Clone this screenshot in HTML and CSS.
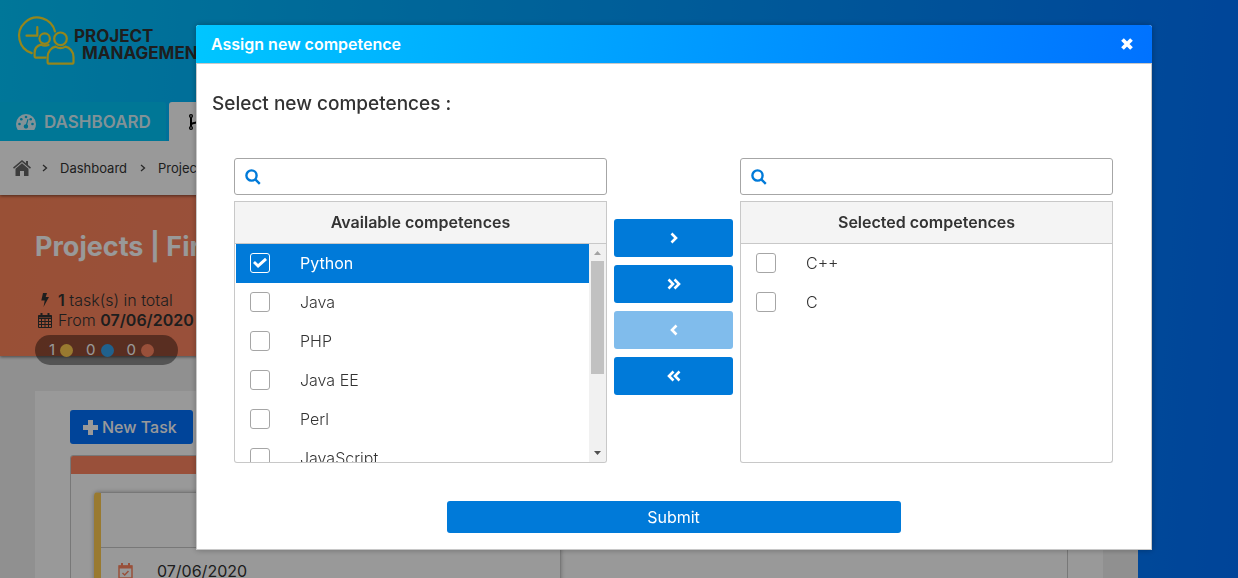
FILE: index.html
```html
<!DOCTYPE html>
<html lang="en">
<head>
<meta charset="utf-8">
<title>Project Management</title>
<link rel="stylesheet" href="styles.css">
</head>
<body>
<div class="page">
  <header class="brand">
    <svg class="brand-logo" width="56" height="50" viewBox="0 0 56 50" fill="none" stroke="#f8df2e" stroke-width="2.2" stroke-linecap="round" stroke-linejoin="round">
      <path d="M13.700 37.100A18.200 18.200 0 1 1 37 15.500"/>
      <path d="M8.500 19.700H19.300V11"/>
      <circle cx="26.700" cy="22.600" r="5.200"/>
      <path d="M27.500 41.600H17.600Q16.600 41.600 16.600 40.600V37C16.600 32.500 19.500 29.500 23 28.600Q26.500 30.500 30.500 29"/>
      <circle cx="42.500" cy="22.800" r="6.300"/>
      <path d="M29.600 46.500V41C29.600 35.500 33.500 31.500 37.500 30.600Q42.500 33.500 47.500 30.600C51.500 31.500 55.500 35.500 55.500 41V46.500Q55.500 47.600 54.500 47.600H30.600Q29.600 47.600 29.600 46.500Z"/>
    </svg>
    <p class="brand-name"><span>PROJECT</span><span class="brand-second">MANAGEMENT</span></p>
  </header>
  <nav class="tabs">
    <a class="tab" href="#">
      <svg width="20" height="16" viewBox="0 0 20 16"><path fill="currentColor" d="M10 0A10 10 0 0 0 0 10Q0 13 1.500 15.500Q1.700 16 2.500 16H17.500Q18.300 16 18.500 15.500Q20 13 20 10A10 10 0 0 0 10 0Z"/><g fill="#00b9e8"><circle cx="3.500" cy="10" r="1.300"/><circle cx="5.300" cy="5.300" r="1.300"/><circle cx="10" cy="3" r="1.300"/><circle cx="14.700" cy="5.300" r="1.300"/><circle cx="16.500" cy="10" r="1.300"/><path d="M11.500 5L12.500 5.300L11.200 10.600A2.200 2.200 0 1 1 10 10.200Z"/></g></svg>
      DASHBOARD
    </a>
    <a class="tab tab-active" href="#" aria-label="Projects">
      <svg width="16" height="16" viewBox="0 0 16 16" fill="none" stroke="#000" stroke-width="1.300"><circle cx="3" cy="2" r="1.400"/><circle cx="3" cy="14" r="1.400"/><circle cx="12" cy="4" r="1.400"/><path stroke-width="2" d="M3 3.500V12.500M3 10.500C5 7.500 11 10 12 5.500"/></svg>
    </a>
  </nav>
  <main class="main">
    <nav class="crumbs">
      <a href="#" aria-label="Home"><svg width="18" height="16" viewBox="0 0 18 16" fill="#666"><path d="M9 0L0 7.500L1 8.700L9 2L17 8.700L18 7.500L15 5V1H13V3.300Z"/><path d="M9 3.300L2.500 8.800V16H7V11H11V16H15.500V8.800Z"/></svg></a>
      <svg width="6" height="8" viewBox="0 0 6 8" fill="none" stroke="#444" stroke-width="1.300"><path d="M1 1L4.500 4L1 7"/></svg>
      <a class="crumb" href="#">Dashboard</a>
      <svg width="6" height="8" viewBox="0 0 6 8" fill="none" stroke="#444" stroke-width="1.300"><path d="M1 1L4.500 4L1 7"/></svg>
      <a class="crumb" href="#">Projects</a>
    </nav>
    <section class="hero">
      <h1 class="hero-title">Projects | Fir</h1>
      <p class="hero-line"><svg width="20" height="16" viewBox="0 0 20 16"><path fill="#333" d="M8 1H12L10.700 5H14L8.500 15L9.700 8.500H6.300Z"/></svg><span><b>1</b> task(s) in total</span></p>
      <p class="hero-line"><svg width="20" height="16" viewBox="0 0 20 16" fill="none" stroke="#333"><path d="M3.500 3.500H16.500V15.500H3.500ZM3.500 6.500H16.500M3.500 9.500H16.500M3.500 12.500H16.500M6.500 6V15M10 6V15M13.500 6V15"/><path stroke-width="2" d="M6.500 1V4M13.500 1V4M3.500 4.500H16.500"/></svg><span>From <b>07/06/2020</b></span></p>
      <div class="counts">
        <span>1</span><i class="dot dot-yellow"></i>
        <span>0</span><i class="dot dot-blue"></i>
        <span>0</span><i class="dot dot-coral"></i>
      </div>
    </section>
    <section class="board">
      <button class="new-task" type="button"><svg width="15" height="15" viewBox="0 0 15 15" fill="currentColor"><path d="M5 0H10V5H15V10H10V15H5V10H0V5H5Z"/></svg>New Task</button>
      <div class="lane">
        <div class="lane-bar"></div>
        <article class="card">
          <div class="card-head"></div>
          <p class="card-date"><svg width="15" height="16" viewBox="0 0 15 16" fill="none" stroke="#ff8562" stroke-width="1.500"><path d="M1 3H14V15H1Z"/><path stroke-width="3" d="M1 4H14"/><path stroke-width="2" d="M4 0V4M11 0V4"/><path d="M4.500 10L6.700 12L10.500 8"/></svg>07/06/2020</p>
        </article>
      </div>
    </section>
  </main>
</div>

<div class="overlay">
  <div class="modal" role="dialog" aria-labelledby="modal-title">
    <header class="modal-head">
      <h2 class="modal-title" id="modal-title">Assign new competence</h2>
      <button class="close" type="button" aria-label="Close"><svg width="12" height="12" viewBox="0 0 12 12" fill="none" stroke="#fff" stroke-width="3.800" stroke-linecap="butt"><path d="M1.500 1.500L10.500 10.500M10.500 1.500L1.500 10.500"/></svg></button>
    </header>
    <form class="modal-body">
      <h3 class="prompt">Select new competences :</h3>
      <div class="picker">
        <section class="pick">
          <label class="search"><svg width="16" height="16" viewBox="0 0 16 16" fill="none" stroke="#007ad9" stroke-width="2.400"><circle cx="6.500" cy="6.500" r="5.100"/><path d="M10.300 10.300L14.800 14.800"/></svg><input type="text" aria-label="Search available competences"></label>
          <h4 class="pick-head">Available competences</h4>
          <div class="pick-body">
            <div class="list">
              <label class="item item-on"><input type="checkbox" checked><span>Python</span></label>
              <label class="item"><input type="checkbox"><span>Java</span></label>
              <label class="item"><input type="checkbox"><span>PHP</span></label>
              <label class="item"><input type="checkbox"><span>Java EE</span></label>
              <label class="item"><input type="checkbox"><span>Perl</span></label>
              <label class="item"><input type="checkbox"><span>JavaScript</span></label>
            </div>
            <div class="scroll" aria-hidden="true">
              <svg width="17" height="17" viewBox="0 0 17 17" fill="#a3a3a3"><path d="M5 11L8.500 7L12 11Z"/></svg>
              <div class="thumb"></div>
              <svg width="17" height="17" viewBox="0 0 17 17" fill="#505050"><path d="M5 6L8.500 10L12 6Z"/></svg>
            </div>
          </div>
        </section>
        <div class="moves">
          <button class="move" type="button" aria-label="Add selected"><svg width="14" height="12" viewBox="0 0 14 12"><path d="M4.500 1.500L9 6L4.500 10.500"/></svg></button>
          <button class="move" type="button" aria-label="Add all"><svg width="14" height="12" viewBox="0 0 14 12"><path d="M1.500 1.500L6 6L1.500 10.500M7.500 1.500L12 6L7.500 10.500"/></svg></button>
          <button class="move" type="button" aria-label="Remove selected" disabled><svg width="14" height="12" viewBox="0 0 14 12"><path d="M9.500 1.500L5 6L9.500 10.500"/></svg></button>
          <button class="move" type="button" aria-label="Remove all"><svg width="14" height="12" viewBox="0 0 14 12"><path d="M6.500 1.500L2 6L6.500 10.500M12.500 1.500L8 6L12.500 10.500"/></svg></button>
        </div>
        <section class="pick">
          <label class="search"><svg width="16" height="16" viewBox="0 0 16 16" fill="none" stroke="#007ad9" stroke-width="2.400"><circle cx="6.500" cy="6.500" r="5.100"/><path d="M10.300 10.300L14.800 14.800"/></svg><input type="text" aria-label="Search selected competences"></label>
          <h4 class="pick-head">Selected competences</h4>
          <div class="pick-body">
            <div class="list">
              <label class="item"><input type="checkbox"><span>C++</span></label>
              <label class="item"><input type="checkbox"><span>C</span></label>
            </div>
          </div>
        </section>
      </div>
      <button class="submit" type="button">Submit</button>
    </form>
  </div>
</div>
</body>
</html>
```
FILE: styles.css
```css
* { box-sizing: border-box; }

body {
  margin: 0;
  height: 100vh;
  overflow: hidden;
  font-family: Inter, "Open Sans", sans-serif;
  font-size: 16px;
  line-height: 20px;
  color: #333;
}

h1, h2, h3, h4, p { margin: 0; }
a { color: inherit; text-decoration: none; }
button { border: 0; padding: 0; font: inherit; color: #fff; cursor: pointer; }
svg { flex: none; overflow: visible; }

.page {
  height: 100%;
  display: flex;
  flex-direction: column;
  background: linear-gradient(94deg, #00c6ff, #0072ff);
}

.brand {
  flex: none;
  height: 102px;
  padding: 16px 0 0 18px;
  display: flex;
}
.brand-name {
  display: flex;
  flex-direction: column;
  padding-top: 12px;
  font-size: 17px;
  font-weight: 700;
  line-height: 17px;
}
.brand-second { padding-left: 8px; }

.tabs { flex: none; display: flex; gap: 3px; }
.tab {
  height: 39px;
  padding: 0 15px 0 16px;
  display: flex;
  align-items: center;
  gap: 8px;
  background: #00c6fa;
  color: #d8f3fc;
  font-size: 17px;
  font-weight: 600;
  border-radius: 0 3px 0 0;
}
.tab-active {
  width: 120px;
  padding-left: 19px;
  background: #fff;
  border-radius: 3px 3px 0 0;
}

.main {
  flex: 1;
  min-height: 0;
  overflow: hidden;
  margin-right: 100px;
  background: #f1f1f1;
}

.crumbs {
  position: relative;
  height: 54px;
  padding-left: 13px;
  display: flex;
  align-items: center;
  gap: 11px;
  background: #fff;
  box-shadow: 0 1px 3px rgba(0, 0, 0, .5);
  font-size: 13px;
}
.crumbs a { display: flex; }
.crumb { padding: 0 2px 0 1px; }

.hero {
  height: 161px;
  padding: 36px 35px 0;
  background: linear-gradient(100deg, #ff865a, #ff8562 20%);
  box-shadow: 0 1px 3px rgba(0, 0, 0, .5);
}
.hero-title {
  margin-bottom: 27px;
  font-size: 27px;
  line-height: 32px;
  font-weight: 700;
  color: #fff;
}
.hero-line { display: flex; align-items: center; gap: 3px; font-weight: 300; }
.hero-line b { font-weight: 600; }
.counts {
  width: 143px;
  height: 30px;
  margin-top: 5px;
  padding-left: 14px;
  display: flex;
  align-items: center;
  gap: 5px;
  border-radius: 15px;
  background: rgba(0, 0, 0, .42);
  color: #fff;
  font-size: 15px;
}
.dot { width: 13px; height: 13px; border-radius: 50%; margin-right: 8px; }
.dot-yellow { background: #ffcc50; }
.dot-blue { background: #36a2eb; }
.dot-coral { background: #ff8562; }

.board {
  height: 300px;
  margin: 35px 35px 0;
  padding: 19px 35px 0;
  background: #fff;
}
.new-task {
  height: 34px;
  padding: 0 16px 0 13px;
  display: flex;
  align-items: center;
  gap: 4px;
  border-radius: 3px;
  background: #0072ff;
  font-weight: 500;
}
.lane {
  height: 240px;
  margin-top: 11px;
  border: 1px solid #c8c8c8;
  border-radius: 3px 3px 0 0;
}
.lane-bar { height: 18px; background: #ff8562; border-radius: 2px 2px 0 0; }
.card {
  width: 467px;
  height: 200px;
  margin: 18px 0 0 23px;
  border: 1px solid #c8c8c8;
  border-left: 7px solid #ffcc50;
  border-radius: 4px;
  box-shadow: 0 0 4px rgba(0, 0, 0, .3);
}
.card-head { height: 55px; border-bottom: 1px solid #c8c8c8; }
.card-date {
  padding: 13px 0 0 17px;
  display: flex;
  align-items: center;
  gap: 24px;
}

.overlay {
  position: fixed;
  inset: 0;
  display: flex;
  align-items: flex-start;
  padding: 25px 86px 0 196px;
  background: rgba(0, 0, 0, .4);
}
.modal {
  flex: 1;
  min-width: 0;
  background: #fff;
  border-radius: 3px 3px 0 0;
  box-shadow: 0 0 6px rgba(0, 0, 0, .3);
}
.modal-head {
  height: 38px;
  padding: 0 19px 0 15px;
  display: flex;
  align-items: center;
  justify-content: space-between;
  border-radius: 3px 3px 0 0;
  background: linear-gradient(100deg, #00c6ff, #0072ff);
  color: #fff;
}
.modal-title { font-size: 16px; line-height: 20px; font-weight: 600; }
.close { display: flex; background: none; }
.modal-body {
  padding: 28px 38px 16px 37px;
  border: 1px solid #c8c8c8;
}
.prompt {
  margin: 0 0 42px -22px;
  font-size: 19px;
  line-height: 24px;
  font-weight: 500;
}

.picker {
  display: grid;
  grid-template-columns: 1fr 119px 1fr;
  gap: 7px;
}
.search {
  height: 37px;
  margin-bottom: 6px;
  padding: 0 10px;
  display: flex;
  align-items: center;
  gap: 8px;
  border: 1px solid #a6a6a6;
  border-radius: 3px;
}
.search input {
  flex: 1;
  min-width: 0;
  border: 0;
  outline: 0;
  padding: 0;
  background: none;
  font: inherit;
}
.pick-head {
  height: 43px;
  border: 1px solid #c8c8c8;
  background: #f4f4f4;
  font-size: 16px;
  line-height: 41px;
  font-weight: 600;
  text-align: center;
}
.pick-body {
  height: 219px;
  display: flex;
  overflow: hidden;
  border: 1px solid #c8c8c8;
  border-top: 0;
  border-radius: 0 0 3px 3px;
}
.list { flex: 1; padding-left: 1px; }
.item {
  height: 39px;
  padding-bottom: 1px;
  display: grid;
  grid-template-columns: 64px 1fr;
  align-items: center;
  font-weight: 300;
}
.item-on { background: #007ad9; color: #fff; font-weight: 400; }
.item input {
  appearance: none;
  width: 20px;
  height: 20px;
  margin: 0 0 0 14px;
  border: 1px solid #a6a6a6;
  border-radius: 3px;
  background: #fff;
}
.item input:checked {
  display: grid;
  place-items: center;
  border-color: #fff;
  background: #007ad9;
}
.item input:checked::before {
  content: "";
  width: 14px;
  height: 12px;
  background: #fff;
  clip-path: polygon(0 50%, 14% 33%, 36% 58%, 86% 6%, 100% 24%, 36% 92%);
}
.scroll {
  width: 17px;
  display: flex;
  flex-direction: column;
  justify-content: space-between;
  background: #f1f1f1;
}
.thumb { height: 113px; margin: 0 2px auto; background: #c1c1c1; }

.moves {
  display: flex;
  flex-direction: column;
  gap: 8px;
  padding-top: 61px;
}
.move {
  height: 38px;
  display: flex;
  align-items: center;
  justify-content: center;
  border-radius: 3px;
  background: #007ad9;
}
.move:disabled { background: #80bcec; }
.move svg { fill: none; stroke: #fff; stroke-width: 2.6; }

.submit {
  display: block;
  width: 100%;
  max-width: 454px;
  height: 32px;
  margin: 38px auto 0;
  border-radius: 3px;
  background: #007ad9;
}
```
